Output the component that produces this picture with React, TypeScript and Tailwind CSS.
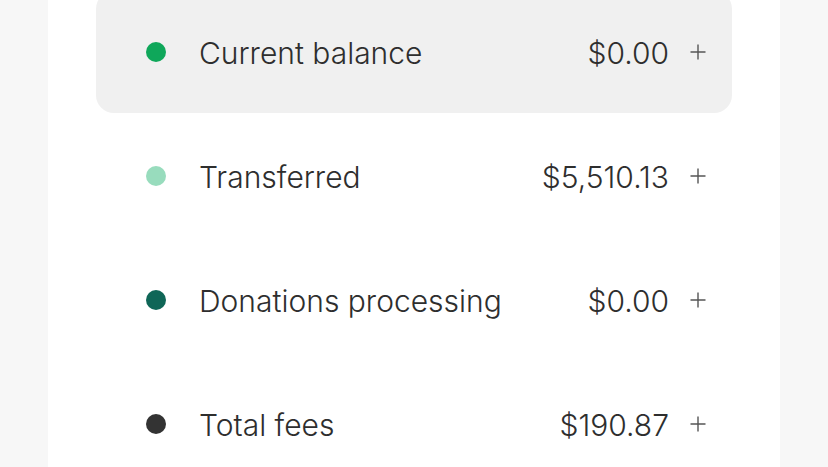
import React from "react";

type Row = { label: string; amount: string; dot: string; active?: boolean };

const rows: Row[] = [
    { label: "Current balance", amount: "$0.00", dot: "bg-[#0fa75a]", active: true },
    { label: "Transferred", amount: "$5,510.13", dot: "bg-[#98dcbd]" },
    { label: "Donations processing", amount: "$0.00", dot: "bg-[#0f6657]" },
    { label: "Total fees", amount: "$190.87", dot: "bg-[#333333]" },
];

const Plus: React.FC = () => (
    <svg width="16" height="16" viewBox="0 0 16 16" className="text-[#555]">
        <path d="M8 0.5V15.5M0.5 8H15.5" stroke="currentColor" strokeWidth="1.4" />
    </svg>
);

const App: React.FC = () => {
    return (
        <div className="w-[828px] h-[467px] overflow-hidden bg-[#f7f7f7] flex justify-center font-['Inter',sans-serif] text-[#2e2e2e]">
            <div className="w-[732px] h-full bg-white px-12">
                <div className="flex flex-col gap-[2px] -mt-[9px]">
                    {rows.map((r) => (
                        <div
                            key={r.label}
                            className={`h-[122px] shrink-0 rounded-[18px] flex items-center pl-[50px] pr-[26px] ${r.active ? "bg-[#f0f0f0]" : ""}`}
                        >
                            <span className={`w-5 h-5 rounded-full ${r.dot}`} />
                            <span className="ml-[33px] text-[30px] leading-none font-light mt-[2px]">{r.label}</span>
                            <span className="ml-auto text-[30px] leading-none font-light mt-[2px]">{r.amount}</span>
                            <span className="ml-[21px] flex items-center"><Plus /></span>
                        </div>
                    ))}
                </div>
            </div>
        </div>
    );
};

export default App;
